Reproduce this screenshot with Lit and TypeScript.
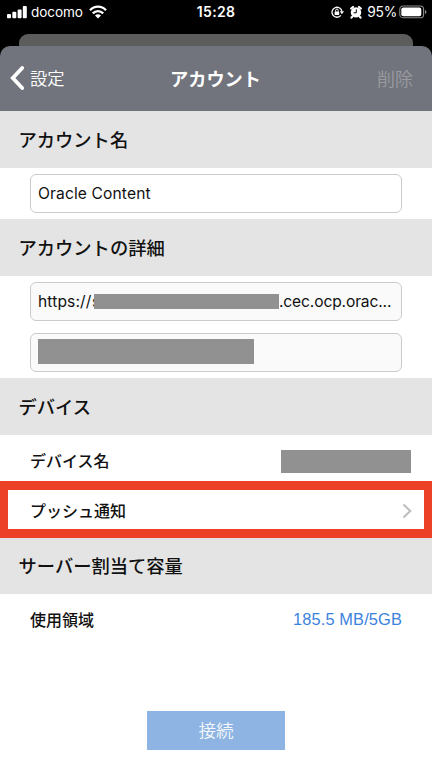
import { LitElement, html, css } from "lit";
import { customElement, property } from "lit/decorators.js";

@customElement("status-bar")
class StatusBar extends LitElement {
  static styles = css`
    :host { display: grid; grid-template-columns: 1fr auto 1fr; align-items: center; height: 24px; color: #fff; font: 500 14px/24px Inter, sans-serif; }
    .side { display: flex; align-items: center; }
    .left { padding-left: 7px; }
    .right { justify-content: flex-end; padding-right: 5px; }
    .carrier { width: 53px; margin: 0 5px 0 4px; font-size: 13.6px; font-weight: 400; letter-spacing: -0.12px; }
    .time { font-size: 14px; font-weight: 600; letter-spacing: 0.3px; }
    .level { margin: 0 2px 0 5px; font-weight: 400; font-size: 13.8px; letter-spacing: -0.25px; }
    svg { display: block; flex: none; }
    .alarm { margin-left: 6px; }
  `;
  render() {
    return html`
      <div class="side left">
        <svg width="20" height="14" viewBox="0 0 20 14" fill="#fff">
          <rect x="0" y="9" width="4" height="4.3" rx="1" /><rect x="5.3" y="6.8" width="4" height="6.5" rx="1" />
          <rect x="10.6" y="4.4" width="4" height="8.9" rx="1" /><rect x="15.8" y="1" width="4" height="12.3" rx="1" />
        </svg>
        <span class="carrier">docomo</span>
        <svg width="18" height="14" viewBox="0 0 18 14" fill="none" stroke="#fff" stroke-width="2.3">
          <path d="M1 5.2C5.5.4 12.5.4 17 5.2" /><path d="M3.8 8.4c3-3.1 7.4-3.1 10.4 0" />
          <path d="M9 13.4 6 10.4c1.7-1.5 4.3-1.5 6 0z" fill="#fff" stroke="none" />
        </svg>
      </div>
      <span class="time">15:28</span>
      <div class="side right">
        <svg width="13" height="14" viewBox="0 0 13 14" fill="none" stroke="#fff" stroke-width="1.3">
          <path d="M9.9 10.4a5 5 0 1 1 1-4.2" /><path d="M8.8 6.2h4.2l-2.1 3z" fill="#fff" stroke="none" />
          <rect x="3.6" y="6.5" width="4.6" height="3.5" rx=".4" fill="#fff" stroke="none" /><path d="M4.6 6.7V5.4a1.3 1.3 0 0 1 2.6 0v1.3" stroke-width="1" />
        </svg>
        <svg class="alarm" width="12" height="14" viewBox="0 0 12 14">
          <circle cx="6" cy="7.4" r="5.2" fill="#fff" />
          <path d="M1.2 3.5 3 2M10.8 3.5 9 2M2.3 11.6l-.8 1M9.7 11.6l.8 1" stroke="#fff" stroke-width="2.2" stroke-linecap="round" />
          <path d="M6.3 4.4v3.4H3.6" fill="none" stroke="#000" stroke-width="1" />
        </svg>
        <span class="level">95%</span>
        <svg width="28" height="14" viewBox="0 0 28 14">
          <rect x=".8" y="1" width="23.8" height="11.8" rx="3.4" fill="none" stroke="#8c8c8c" stroke-width="1.1" />
          <rect x="2.3" y="2.5" width="20" height="8.8" rx="2" fill="#fff" /><path d="M26 5q1.5.4 1.5 2T26 9z" fill="#8c8c8c" />
        </svg>
      </div>`;
  }
}

@customElement("section-title")
class SectionTitle extends LitElement {
  @property() label = "";
  static styles = css`
    :host { display: flex; align-items: center; height: 57px; padding: 0 0 2px 18.5px; box-sizing: border-box; background: #e4e4e4; color: #111; font: 500 18.3px/26px "Noto Sans CJK JP", sans-serif; }
  `;
  render() { return html`<span>${this.label}</span>`; }
}

@customElement("app-root")
class AppRoot extends LitElement {
  static styles = css`
    :host { display: flex; flex-direction: column; height: 768px; overflow: hidden; background: #fff; color: #111; font-family: Inter, "Noto Sans CJK JP", sans-serif; white-space: nowrap; }
    .top { background: #000; }
    .behind { height: 12px; margin: 10px 19px 0; border-radius: 9px 9px 0 0; background: #5c5c5c; }
    .nav { display: grid; grid-template-columns: 1fr auto 1fr; align-items: center; height: 65px; padding: 0 19px 2px; box-sizing: border-box; border-radius: 10px 10px 0 0; background: #71747c; color: #fff; font: 400 17.3px/26px "Noto Sans CJK JP", sans-serif; }
    .back { display: flex; align-items: center; gap: 5px; margin-left: -10px; font-weight: 350; }
    .back svg { margin-top: 1px; }
    .title { font-weight: 700; font-size: 18.2px; margin-left: -1px; }
    .remove { text-align: right; color: #999ba0; font-weight: 350; font-size: 18px; }
    .fields { display: flex; flex-direction: column; gap: 12px; padding: 6px 30px; }
    .single { height: 39px; }
    .double { height: 90px; }
    .field { display: flex; align-items: center; height: 39px; padding: 0 9px 0 7px; border: 1px solid #cbcbcb; border-radius: 6px; box-sizing: border-box; font-size: 15.6px; letter-spacing: 0.12px; }
    .field.locked { background: #fafafa; }
    .mask { background: #919191; flex: none; }
    .mask.host { position: relative; width: 185px; height: 15px; }
    .mask.user { width: 216px; height: 25px; margin-bottom: 3px; }
    .mask.device { width: 130px; height: 23px; }
    .scheme { width: 54px; }
    .initial { width: 8px; margin-right: -6px; }
    .domain { letter-spacing: -0.14px; }
    .row { display: flex; align-items: center; justify-content: space-between; box-sizing: border-box; padding: 0 30px; font-size: 16px; font-weight: 500; }
    .device-row { height: 46px; padding: 6px 21px 0 30px; }
    .device-row span:first-child { margin-bottom: 3px; }
    .push { height: 57px; border: 8px solid #ec4127; border-top-width: 9px; border-bottom-width: 9px; padding: 0 12px 0 22px; }
    .push svg { margin-top: 2px; }
    .last { height: 56px; }
    .usage { height: 49px; }
    .value { color: #3b82dc; font: 400 16.4px/24px "Liberation Sans", sans-serif; letter-spacing: 0.12px; }
    .connect { align-self: center; display: flex; justify-content: center; align-items: center; width: 138px; height: 39px; padding-bottom: 1px; box-sizing: border-box; margin-top: 67.5px; background: #8db4e2; color: #f4f8fc; font: 350 17.6px/26px "Noto Sans CJK JP", sans-serif; }
  `;
  render() {
    return html`
      <div class="top">
        <status-bar></status-bar>
        <div class="behind"></div>
        <div class="nav">
          <div class="back">
            <svg width="16" height="26" viewBox="0 0 16 26" fill="none" stroke="#fff" stroke-width="3.8" stroke-linecap="round" stroke-linejoin="miter"><path d="M13.2 3 3.8 13l9.4 10" /></svg>
            <span>設定</span>
          </div>
          <span class="title">アカウント</span>
          <span class="remove">削除</span>
        </div>
      </div>
      <section-title label="アカウント名"></section-title>
      <div class="fields single"><div class="field">Oracle Content</div></div>
      <section-title label="アカウントの詳細"></section-title>
      <div class="fields double">
        <div class="field locked"><span class="scheme">https://</span><span class="initial">s</span><span class="mask host"></span><span class="domain">.cec.ocp.orac...</span></div>
        <div class="field locked"><span class="mask user"></span></div>
      </div>
      <section-title label="デバイス"></section-title>
      <div class="row device-row"><span>デバイス名</span><span class="mask device"></span></div>
      <div class="row push"><span>プッシュ通知</span>
        <svg width="10" height="16" viewBox="0 0 10 16" fill="none" stroke="#bdbdbf" stroke-width="2"><path d="m1.5 1.5 6.8 6.5-6.8 6.5" /></svg>
      </div>
      <section-title class="last" label="サーバー割当て容量"></section-title>
      <div class="row usage"><span>使用領域</span><span class="value">185.5 MB/5GB</span></div>
      <div class="connect">接続</div>`;
  }
}
